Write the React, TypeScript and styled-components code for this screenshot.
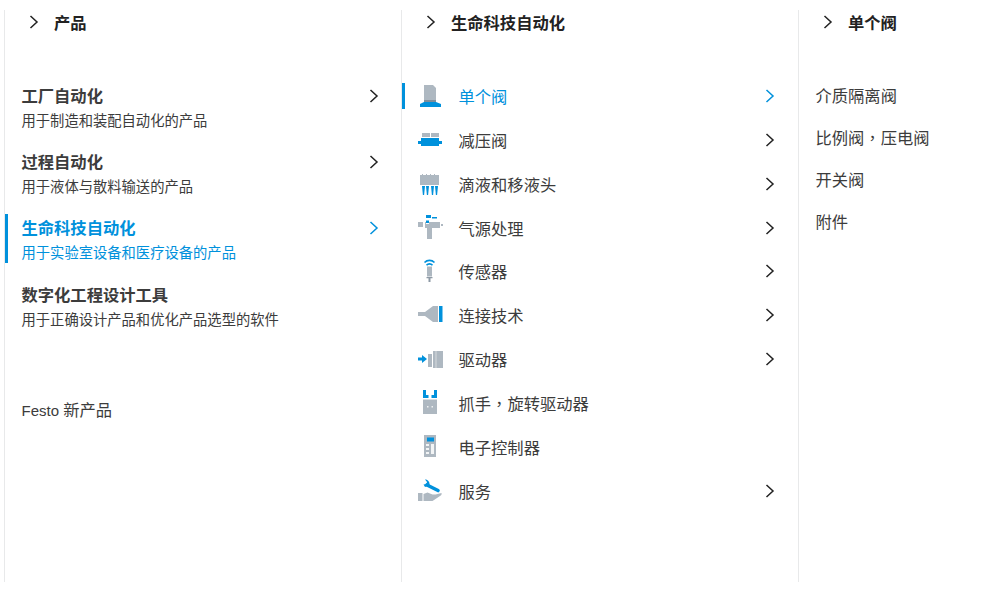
import { createGlobalStyle, styled } from "styled-components";
import type { ReactNode } from "react";

const BLUE = "#0091dc";
const GREY = "#aeb8c1";

const Global = createGlobalStyle`
  html, body { margin: 0; padding: 0; background: #fff; }
  body {
    font-family: "Noto Sans CJK SC", "Liberation Sans", sans-serif;
    color: #3c3c3c;
  }
`;

const Comma = styled.span`
  font-family: "Noto Sans CJK TC", sans-serif;
`;

const Chevron = ({ color = "#222", size = 14 }: { color?: string; size?: number }) => (
  <svg width={size} height={size} viewBox="0 0 14 14" fill="none">
    <path d="M3.5 1 L10 7 L3.5 13" stroke={color} strokeWidth="1.5" />
  </svg>
);

const Icons: Record<string, ReactNode> = {
  valve: (
    <>
      <path d="M7 2h12v15H7z" fill={GREY} />
      <path d="M16 2h3v3z" fill="#fff" />
      <path d="M7 17h12v2H7z" fill="#7f8d9a" />
      <path d="M7 19h12l5 2v3H3v-3z" fill={BLUE} />
    </>
  ),
  regulator: (
    <>
      <path d="M5 6h8v4H5zM14 6h8v4h-8z" fill={GREY} />
      <path d="M4 11h18v3h3v3h-3v2H4v-2H1v-3h3z" fill={BLUE} />
    </>
  ),
  pipette: (
    <>
      <path d="M5 3h1v1H5zM9 3h1v1H9zM13 3h1v1h-1zM17 3h1v1h-1z" fill={GREY} />
      <path d="M3 4h19v10H3z" fill={GREY} />
      <path d="M5 15h3l-.9 9H5.900zM9 15h3l-.9 9H9.900zM14 15h3l-.9 9h-1.200zM18 15h3l-.9 9h-1.200z" fill={BLUE} />
    </>
  ),
  air: (
    <>
      <path d="M9 0h5v3H9zM15 2h5v1.500h-5zM9 5.500h3V8H9z" fill={BLUE} />
      <path d="M8 7h1v2h3V7h11v6h-8v11h-5V13H8zM1 7h5v5H1zM24 9h2v2h-2z" fill={GREY} />
    </>
  ),
  sensor: (
    <>
      <path d="M7.500 4.500a7 7 0 0 1 10 0M9.500 7.200a4 4 0 0 1 6 0" stroke={BLUE} strokeWidth="1.6" fill="none" />
      <path d="M10 8.500h5v10h-5z" fill={GREY} />
      <path d="M9.500 19h6v1.200h-2V24h-2v-3.800h-2z" fill="#8d99a5" />
    </>
  ),
  connect: (
    <>
      <path d="M1 10h7l8-6h5v16h-5l-8-6H1z" fill={GREY} />
      <path d="M22 4h3.500v16H22z" fill={BLUE} />
    </>
  ),
  drive: (
    <>
      <path d="M1 11.500h4V9l5 4-5 4v-2.500H1z" fill={BLUE} />
      <path d="M11 8h4v13h-4z" fill={GREY} />
      <path d="M16 5h10v17H16z" fill={GREY} />
      <path d="M18.500 5h1v17h-1z" fill="#d5dade" />
    </>
  ),
  gripper: (
    <>
      <path d="M6 0h3v5h2.500v3H6zM20 0h-3v5h-2.500v3H20z" fill={BLUE} />
      <path d="M6 9.500h14V24H6z" fill={GREY} />
      <path d="M10 16h1.500v1.500H10zM14.500 16H16v1.500h-1.500z" fill="#eef0f2" />
    </>
  ),
  controller: (
    <>
      <path d="M7 1h12v22H7z" fill={GREY} />
      <path d="M10 3.500h7v4h-7z" fill={BLUE} />
      <path d="M9 10h3v2H9zM9 14h3v2H9zM9 18h3v2H9zM14 10h3v10h-3z" fill="#f2f4f5" />
    </>
  ),
  service: (
    <>
      <path d="M10 7 L21 12.500" stroke={BLUE} strokeWidth="3.6" strokeLinecap="round" />
      <path d="M8 1.500c3 0 5 2.500 4.500 6L8 9 6.500 6.500 9.500 6 10 4z" fill={BLUE} />
      <path d="M1 15h4.500v8H1z" fill={GREY} />
      <path d="M6.500 16l4-1.500 5 2h3l6-1.500c.5 1.500-.5 2.500-1.500 3l-7.500 5H6.500z" fill={GREY} />
    </>
  ),
};

const middleItems: { icon: string; label: ReactNode; more?: boolean; active?: boolean }[] = [
  { icon: "valve", label: "单个阀", more: true, active: true },
  { icon: "regulator", label: "减压阀", more: true },
  { icon: "pipette", label: "滴液和移液头", more: true },
  { icon: "air", label: "气源处理", more: true },
  { icon: "sensor", label: "传感器", more: true },
  { icon: "connect", label: "连接技术", more: true },
  { icon: "drive", label: "驱动器", more: true },
  { icon: "gripper", label: <>抓手<Comma>，</Comma>旋转驱动器</> },
  { icon: "controller", label: "电子控制器" },
  { icon: "service", label: "服务", more: true },
];

const leftItems = [
  { title: "工厂自动化", sub: "用于制造和装配自动化的产品", more: true },
  { title: "过程自动化", sub: "用于液体与散料输送的产品", more: true },
  { title: "生命科技自动化", sub: "用于实验室设备和医疗设备的产品", more: true, active: true },
  { title: "数字化工程设计工具", sub: "用于正确设计产品和优化产品选型的软件" },
];

function App() {
  return (
    <>
      <Global />
      <Page>
        <Column>
          <Heading>
            <Chevron />
            <span>产品</span>
          </Heading>
          <MainList>
            {leftItems.map((item) => (
              <MainRow key={item.title} $active={item.active}>
                <div>
                  <MainTitle>{item.title}</MainTitle>
                  <MainSub>{item.sub}</MainSub>
                </div>
                {item.more && <Chevron color={item.active ? BLUE : "#222"} />}
              </MainRow>
            ))}
          </MainList>
          <Extra><Latin>Festo </Latin>新产品</Extra>
        </Column>
        <Column>
          <Heading>
            <Chevron />
            <span>生命科技自动化</span>
          </Heading>
          <IconList>
            {middleItems.map((item) => (
              <IconRow key={item.icon} $active={item.active}>
                <svg width="26" height="26" viewBox="0 0 26 26">
                  {Icons[item.icon]}
                </svg>
                <RowLabel>{item.label}</RowLabel>
                {item.more && <Chevron color={item.active ? BLUE : "#222"} />}
              </IconRow>
            ))}
          </IconList>
        </Column>
        <Column>
          <Heading>
            <Chevron />
            <span>单个阀</span>
          </Heading>
          <PlainList>
            <PlainRow>介质隔离阀</PlainRow>
            <PlainRow>比例阀<Comma>，</Comma>压电阀</PlainRow>
            <PlainRow>开关阀</PlainRow>
            <PlainRow>附件</PlainRow>
          </PlainList>
        </Column>
      </Page>
    </>
  );
}

const Page = styled.div`
  display: flex;
  width: 1000px;
  height: 598px;
  padding: 10px 0 16px 4px;
  box-sizing: border-box;
  overflow: hidden;
`;

const Column = styled.section`
  width: 397px;
  flex: none;
  border-left: 1px solid #e8e9ea;
  box-sizing: border-box;

  &:last-child {
    width: 200px;
  }
`;

const Heading = styled.h2`
  display: flex;
  align-items: center;
  gap: 13px;
  height: 26px;
  margin: -1px 0 0;
  padding-left: 22px;
  font-size: 16.3px;
  line-height: 26px;
  font-weight: 700;
  color: #222;
`;

const MainList = styled.div`
  margin-top: 47px;
  display: flex;
  flex-direction: column;
`;

const MainRow = styled.div<{ $active?: boolean }>`
  display: flex;
  align-items: flex-start;
  justify-content: space-between;
  height: 49px;
  margin-bottom: 17.2px;
  padding: 0 20px 0 13.5px;
  box-sizing: border-box;
  border-left: 3px solid ${({ $active }) => ($active ? BLUE : "transparent")};
  color: ${({ $active }) => ($active ? BLUE : "#3c3c3c")};

  & > svg {
    margin-top: 7px;
  }
`;

const MainTitle = styled.div`
  font-size: 16.3px;
  line-height: 26px;
  font-weight: 700;
`;

const MainSub = styled.div`
  margin-top: 1px;
  font-size: 14.3px;
  line-height: 22px;
`;

const Extra = styled.div`
  margin: 50px 0 0 16.5px;
  font-size: 16.3px;
  line-height: 24px;
`;

const Latin = styled.span`
  font-family: "Liberation Sans", sans-serif;
  font-size: 15px;
`;

const IconList = styled.div`
  margin-top: 39px;
  display: flex;
  flex-direction: column;
`;

const IconRow = styled.div<{ $active?: boolean }>`
  display: flex;
  align-items: center;
  height: 43.87px;
  padding: 0 21px 0 15px;
  color: ${({ $active }) => ($active ? BLUE : "#3c3c3c")};
  position: relative;

  &::before {
    content: "";
    display: ${({ $active }) => ($active ? "block" : "none")};
    position: absolute;
    left: 0;
    top: 9px;
    width: 3px;
    height: 26px;
    background: ${BLUE};
  }
`;

const RowLabel = styled.span`
  flex: 1;
  margin-left: 15.5px;
  font-size: 16.3px;
`;

const PlainList = styled.div`
  margin-top: 39px;
  display: flex;
  flex-direction: column;
  padding-left: 16.5px;
`;

const PlainRow = styled.div`
  height: 41.9px;
  line-height: 42px;
  font-size: 16.3px;
`;

export default App;
